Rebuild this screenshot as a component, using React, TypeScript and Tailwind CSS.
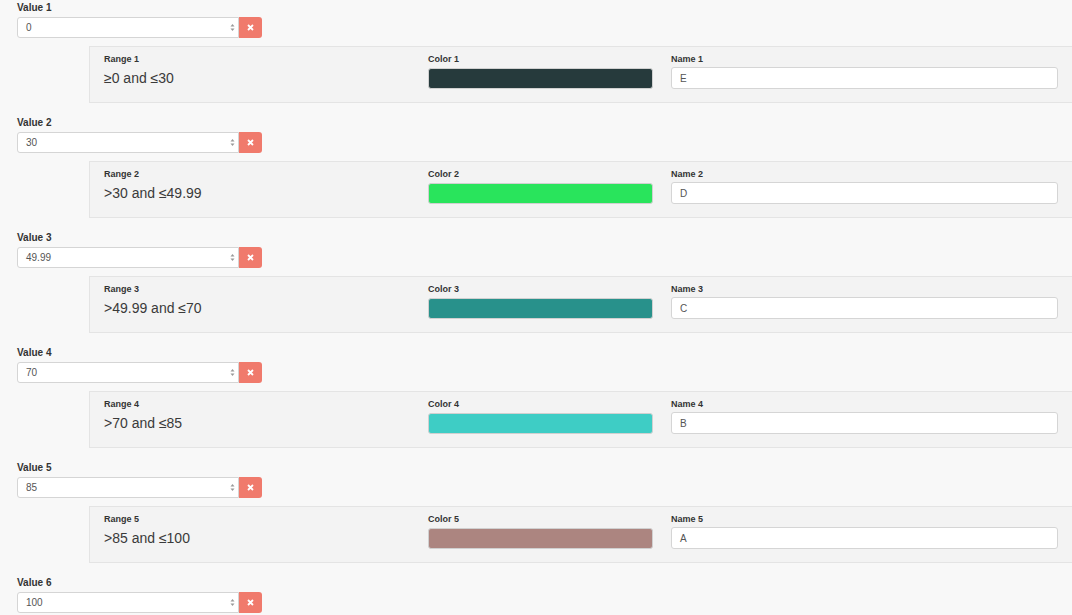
import React from 'react';

const ranges = [
    { range: '≥0 and ≤30', color: '#263a3c', name: 'E' },
    { range: '>30 and ≤49.99', color: '#29e45c', name: 'D' },
    { range: '>49.99 and ≤70', color: '#28918b', name: 'C' },
    { range: '>70 and ≤85', color: '#3ecdc5', name: 'B' },
    { range: '>85 and ≤100', color: '#ac8580', name: 'A' }
];

const values = ['0', '30', '49.99', '70', '85', '100'];

function ValueInput({ index, value }: { index: number; value: string }) {
    return (
        <div className="pl-[17px]">
            <div className="h-[17px] pt-[2px] text-[10px] font-bold leading-[12px] text-[#333]">Value {index}</div>
            <div className="flex h-[21px] w-[245px]">
                <div className="flex flex-1 items-center justify-between rounded-l-[3px] border border-[#d5d5d5] bg-white pl-[8px] pr-[3px]">
                    <span className="text-[10px] text-[#555]">{value}</span>
                    <svg width="5" height="9" viewBox="0 0 5 9">
                        <path d="M0.5 3.5 L2.5 1 L4.5 3.5 Z" fill="#999" />
                        <path d="M0.5 5.5 L2.5 8 L4.5 5.5 Z" fill="#999" />
                    </svg>
                </div>
                <button className="flex w-[23px] items-center justify-center rounded-r-[3px] bg-[#f07a6c]">
                    <svg width="7" height="7" viewBox="0 0 7 7">
                        <path d="M1 1 L6 6 M6 1 L1 6" stroke="white" strokeWidth="1.8" />
                    </svg>
                </button>
            </div>
        </div>
    );
}

export default function App() {
    return (
        <div
            className="h-[615px] w-[1072px] overflow-hidden bg-[#f8f8f8]"
            style={{ fontFamily: '"Liberation Sans", Arial, sans-serif' }}
        >
            {values.map((value, i) => {
                const r = ranges[i];
                return (
                    <div key={i} className={r ? 'h-[115px]' : ''}>
                        <ValueInput index={i + 1} value={value} />
                        {r && (
                            <div className="ml-[89px] mt-[8px] flex h-[57px] w-[1000px] border border-r-0 border-[#e4e4e4] bg-[#f3f3f3] pl-[14px] pt-[6px]">
                                <div className="w-[324px]">
                                    <div className="text-[9px] font-bold leading-[12px] text-[#333]">Range {i + 1}</div>
                                    <div className="mt-[4px] text-[14px] leading-[18px] text-[#3a3a3a]">{r.range}</div>
                                </div>
                                <div className="w-[243px]">
                                    <div className="text-[9px] font-bold leading-[12px] text-[#333]">Color {i + 1}</div>
                                    <div
                                        className="mt-[3px] h-[21px] w-[225px] rounded-[3px] border border-[#d0d0d0]"
                                        style={{ backgroundColor: r.color }}
                                    />
                                </div>
                                <div>
                                    <div className="text-[9px] font-bold leading-[12px] text-[#333]">Name {i + 1}</div>
                                    <div className="mt-[2px] flex h-[22px] w-[387px] items-center rounded-[3px] border border-[#d5d5d5] bg-white pl-[8px] text-[10px] text-[#555]">
                                        {r.name}
                                    </div>
                                </div>
                            </div>
                        )}
                    </div>
                );
            })}
        </div>
    );
}
